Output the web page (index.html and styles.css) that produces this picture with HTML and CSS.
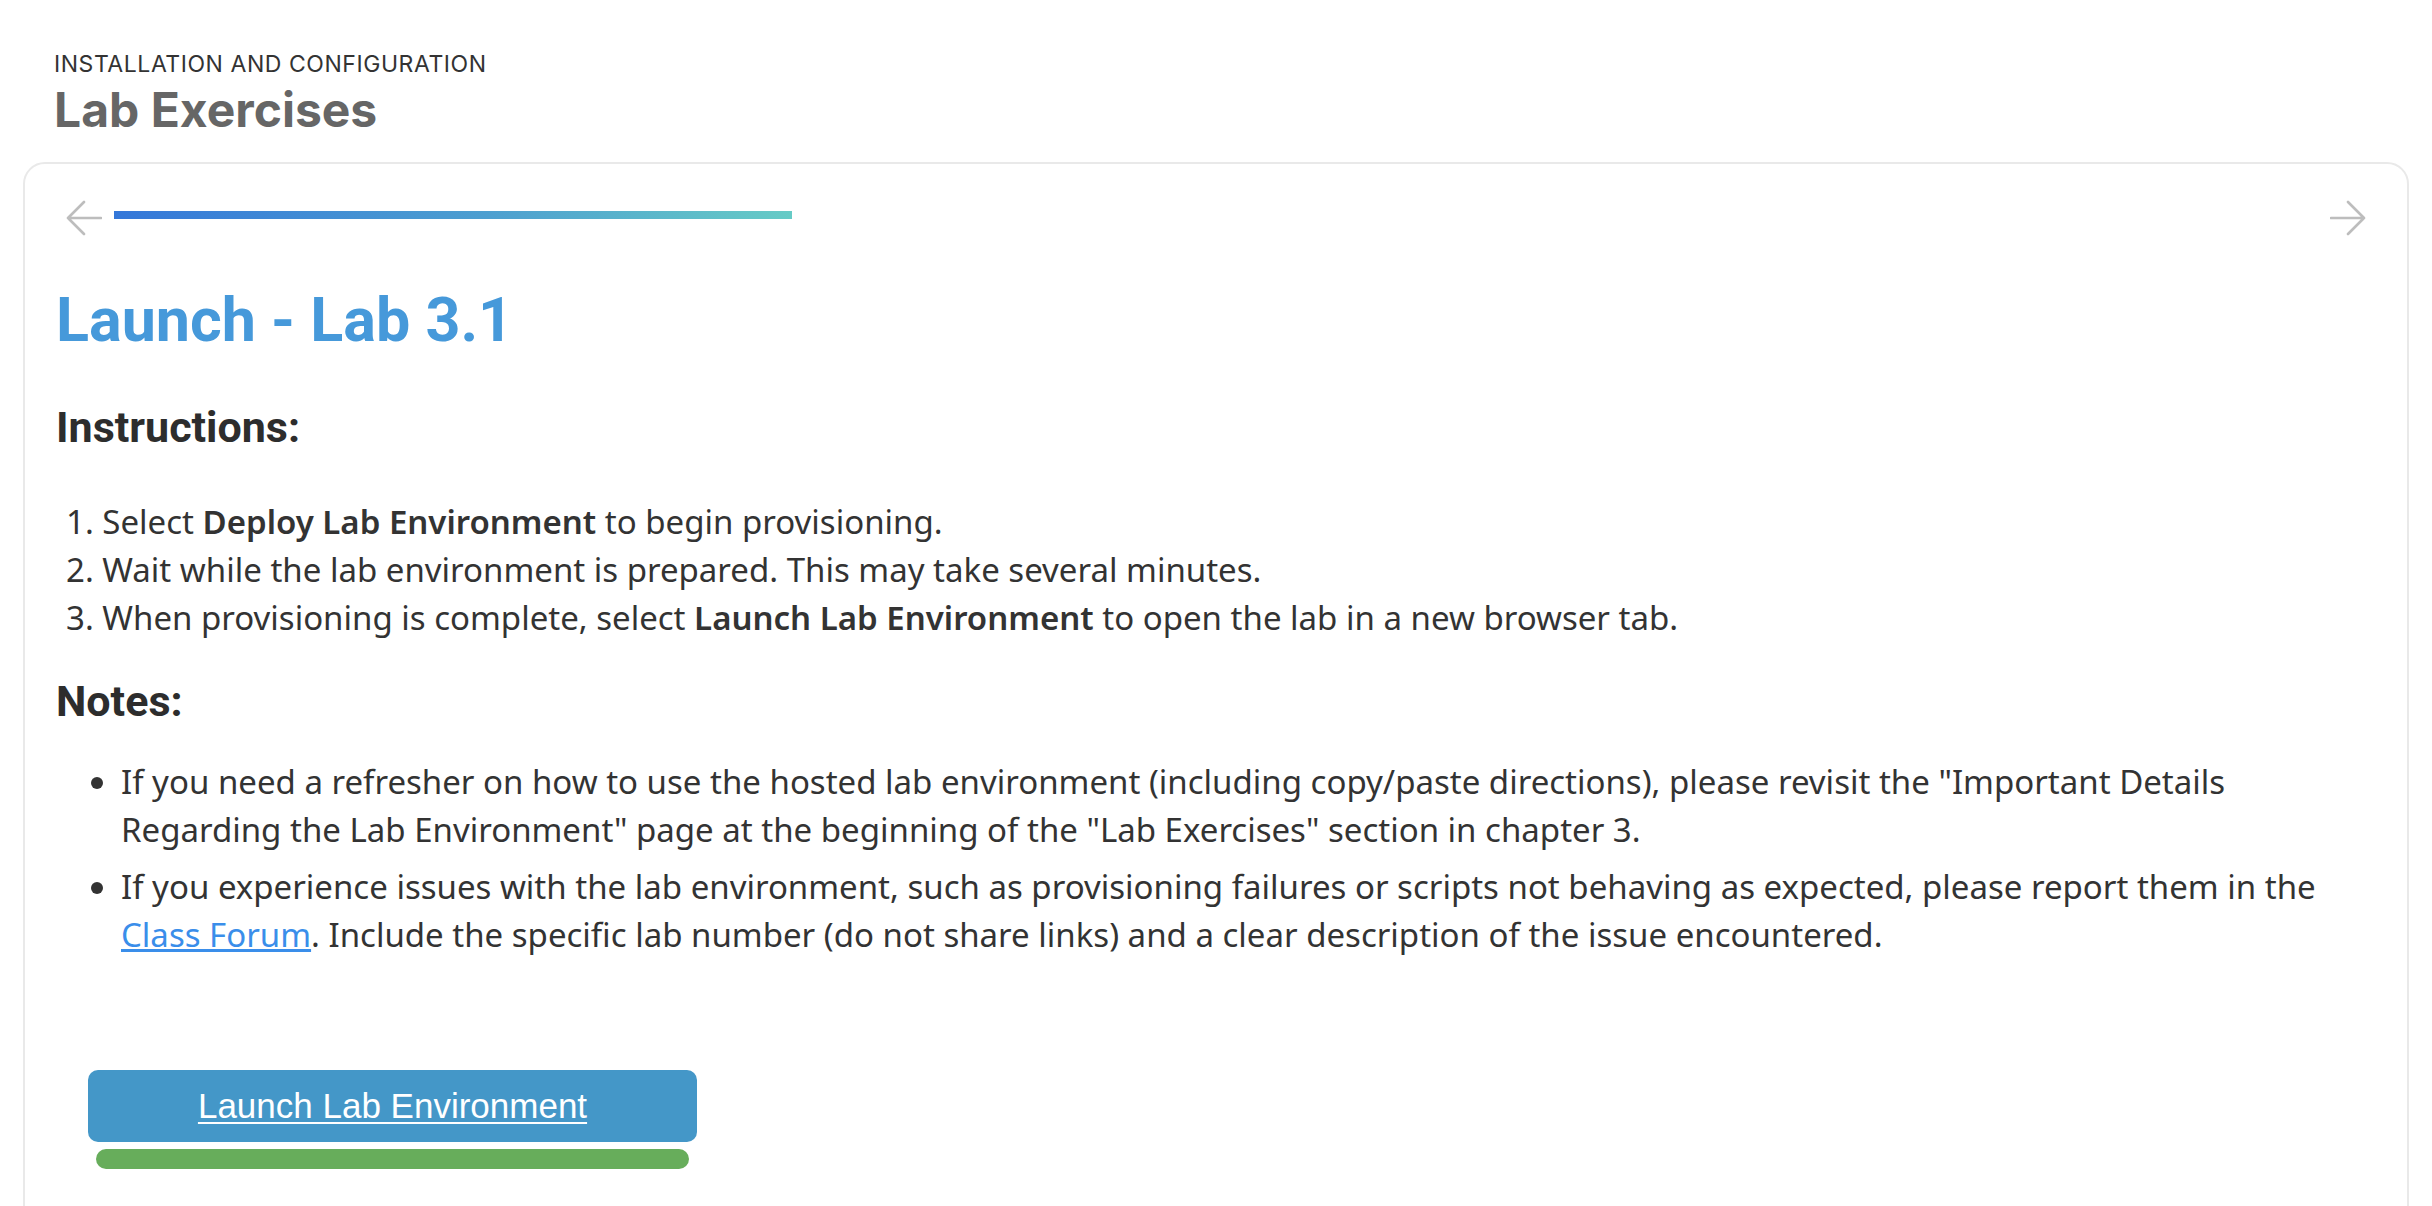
FILE: index.html
```html
<!DOCTYPE html>
<html lang="en">
<head>
<meta charset="utf-8">
<title>Lab Exercises</title>
<link rel="stylesheet" href="styles.css">
</head>
<body>
<div class="page">
  <header class="page-head">
    <div class="eyebrow">INSTALLATION AND CONFIGURATION</div>
    <h1 class="page-title">Lab Exercises</h1>
  </header>
  <section class="card">
    <div class="nav-row">
      <button class="nav-arrow" aria-label="Previous">
        <svg width="36" height="36" viewBox="0 0 36 36" fill="none" stroke="#bdbdbd" stroke-width="2.6" stroke-linecap="round" stroke-linejoin="round"><path d="M35 18H2M18 2L2 18L18 34"/></svg>
      </button>
      <div class="progress"><div class="progress-fill" style="width:678px"></div></div>
      <button class="nav-arrow" aria-label="Next">
        <svg width="36" height="36" viewBox="0 0 36 36" fill="none" stroke="#bdbdbd" stroke-width="2.6" stroke-linecap="round" stroke-linejoin="round"><path d="M1 18H34M18 2L34 18L18 34"/></svg>
      </button>
    </div>
    <div class="content">
      <h2 class="lab-title">Launch - Lab 3.1</h2>
      <h3 class="section-title">Instructions:</h3>
      <ol class="steps">
        <li>Select <strong>Deploy Lab Environment</strong> to begin provisioning.</li>
        <li>Wait while the lab environment is prepared. This may take several minutes.</li>
        <li>When provisioning is complete, select <strong>Launch Lab Environment</strong> to open the lab in a new browser tab.</li>
      </ol>
      <h3 class="section-title notes-title">Notes:</h3>
      <ul class="notes">
        <li>If you need a refresher on how to use the hosted lab environment (including copy/paste directions), please revisit the "Important Details Regarding the Lab Environment" page at the beginning of the "Lab Exercises" section in chapter 3.</li>
        <li>If you experience issues with the lab environment, such as provisioning failures or scripts not behaving as expected, please report them in the <a href="#" class="forum-link">Class Forum</a>. Include the specific lab number (do not share links) and a clear description of the issue encountered.</li>
      </ul>
      <div class="launch">
        <a href="#" class="launch-btn">Launch Lab Environment</a>
        <div class="launch-status"></div>
      </div>
    </div>
  </section>
</div>
</body>
</html>
```

FILE: styles.css
```css
* { box-sizing: border-box; }

html, body {
  margin: 0;
  padding: 0;
  background: #ffffff;
}

body {
  font-family: "Noto Sans", Roboto, Arial, sans-serif;
  color: #333333;
  overflow: hidden;
}

.page {
  padding: 0 23px;
}

.page-head {
  padding: 51px 0 0 31px;
  font-family: Inter, Roboto, sans-serif;
}

.eyebrow {
  font-size: 23px;
  line-height: 27px;
  letter-spacing: 0.55px;
  color: #333333;
  font-weight: 400;
}

.page-title {
  margin: 3px 0 0 0;
  font-size: 48px;
  line-height: 58px;
  font-weight: 700;
  color: #666666;
}

.card {
  margin-top: 23px;
  border: 2px solid #e9e9e9;
  border-radius: 22px;
  min-height: 1100px;
  padding-bottom: 60px;
}

.nav-row {
  display: flex;
  align-items: center;
  padding: 36px 41px 0 41px;
}

.nav-arrow {
  display: flex;
  padding: 0;
  margin: 0;
  border: 0;
  background: none;
  width: 36px;
  height: 36px;
}

.progress {
  flex: 1;
  height: 8px;
  margin: -6px 12px 0 12px;
}

.progress-fill {
  height: 8px;
  background: linear-gradient(90deg, #3477d9 0%, #4d9fd0 55%, #66cbc6 100%);
}

.content {
  padding: 0 31px;
}

.lab-title {
  margin: 48px 0 0 0;
  font-family: Roboto, "Noto Sans", sans-serif;
  font-size: 61px;
  line-height: 72px;
  font-weight: 700;
  color: #4699da;
}

.section-title {
  margin: 46px 0 0 0;
  font-family: Roboto, "Noto Sans", sans-serif;
  font-size: 43px;
  line-height: 50px;
  font-weight: 700;
  color: #2d2d2d;
}

.steps {
  margin: 46px 0 0 0;
  padding-left: 10px;
  list-style-position: inside;
  font-size: 33px;
  line-height: 48px;
}

.steps strong {
  font-weight: 600;
}

.notes-title {
  margin-top: 34px;
}

.notes {
  margin: 32px 0 0 0;
  padding-left: 65px;
  font-size: 33px;
  line-height: 48px;
}

.notes li + li {
  margin-top: 9px;
}

.forum-link {
  color: #3a8eea;
  text-decoration: underline;
}

.launch {
  display: flex;
  flex-direction: column;
  align-items: flex-start;
  margin: 111px 0 0 32px;
  width: 609px;
}

.launch-btn {
  display: block;
  width: 609px;
  height: 72px;
  line-height: 72px;
  text-align: center;
  background: #4497c8;
  border-radius: 10px;
  color: #ffffff;
  font-family: "Liberation Sans", Arial, sans-serif;
  font-size: 35px;
  text-decoration: underline;
  text-decoration-thickness: 2px;
  text-underline-offset: 4px;
}

.launch-status {
  margin: 7px 0 0 8px;
  width: 593px;
  height: 20px;
  border-radius: 10px;
  background: #67ad5b;
}
```
